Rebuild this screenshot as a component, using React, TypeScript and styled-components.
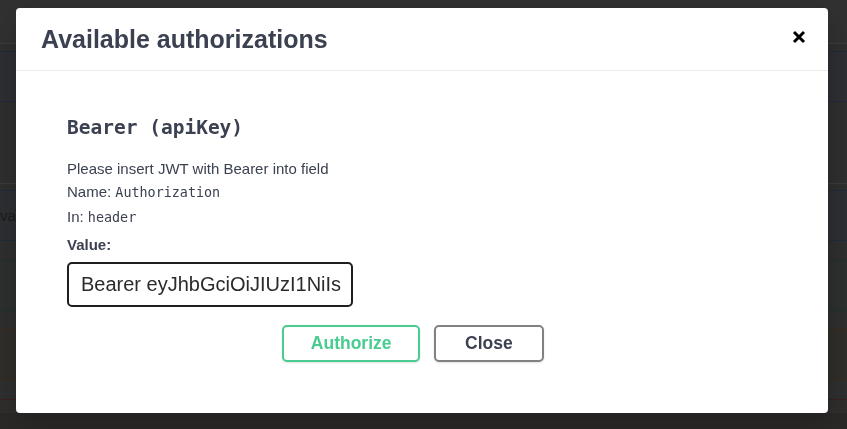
import React from "react";
import styled, { createGlobalStyle } from "styled-components";

const Global = createGlobalStyle`
  html, body { margin: 0; padding: 0; }
  body {
    background: #2f2f2f;
    overflow: hidden;
    font-family: "Liberation Sans", Arial, sans-serif;
  }
`;

/* ---------- dimmed page behind the modal ---------- */
const Backdrop = styled.div`
  display: flex;
  flex-direction: column;
  width: 847px;
  height: 429px;
  background: #2b2927;
`;

const Band = styled.div<{ $h: number; $fill: string; $line?: string }>`
  height: ${(p) => p.$h}px;
  box-sizing: border-box;
  background: ${(p) => p.$fill};
  border-top: ${(p) => (p.$line ? `1px solid ${p.$line}` : "none")};
  display: flex;
  align-items: center;
  font-family: "Liberation Sans", Arial, sans-serif;
  font-size: 15px;
  color: #1c1c1c;
  overflow: hidden;
`;

/* ---------- modal ---------- */
const Overlay = styled.div`
  position: fixed;
  inset: 0;
  display: flex;
  align-items: flex-start;
  justify-content: flex-start;
  padding: 8px 0 0 16px;
  box-sizing: border-box;
`;

const Modal = styled.div`
  width: 812px;
  background: #fff;
  border-radius: 4px;
  box-shadow: 0 10px 30px rgba(0, 0, 0, 0.2);
  display: flex;
  flex-direction: column;
`;

const Header = styled.div`
  height: 62px;
  display: flex;
  align-items: center;
  justify-content: space-between;
  padding: 0 22px 0 25px;
  border-bottom: 1px solid #ebebeb;
`;

const Title = styled.h3`
  margin: 0;
  font-family: "Liberation Sans", Arial, sans-serif;
  font-weight: 700;
  font-size: 25px;
  line-height: 63px;
  color: #3b4151;
`;

const CloseIcon = styled.button`
  border: none;
  background: none;
  padding: 0;
  width: 14px;
  height: 14px;
  display: flex;
  margin-bottom: 4px;
  cursor: pointer;
`;

const Body = styled.div`
  display: flex;
  flex-direction: column;
  align-items: flex-start;
  padding: 45px 51px 51px 51px;
`;

const SchemeTitle = styled.h4`
  margin: 0;
  font-family: "DejaVu Sans Mono", "Liberation Mono", monospace;
  font-weight: 700;
  font-size: 19.5px;
  line-height: 24px;
  color: #3b4151;
`;

const Para = styled.p<{ $mt: number }>`
  margin: ${(p) => p.$mt}px 0 0 0;
  font-family: "Liberation Sans", Arial, sans-serif;
  font-size: 15px;
  line-height: 20px;
  color: #3b4151;
`;

const Code = styled.code`
  font-family: "DejaVu Sans Mono", "Liberation Mono", monospace;
  font-size: 13.4px;
  line-height: 1;
  color: #3b4151;
`;

const Label = styled.label`
  margin-top: 8px;
  font-family: "Liberation Sans", Arial, sans-serif;
  font-weight: 700;
  font-size: 15px;
  line-height: 20px;
  color: #3b4151;
`;

const Input = styled.input`
  margin-top: 7px;
  width: 286px;
  height: 45px;
  box-sizing: border-box;
  border: 2px solid #1e1e1e;
  border-radius: 5px;
  padding: 0 8px 0 12px;
  font-family: "Liberation Sans", Arial, sans-serif;
  font-size: 20px;
  color: #2b2b2b;
  background: #fff;
  outline: none;
`;

const Actions = styled.div`
  align-self: stretch;
  margin-top: 18px;
  display: flex;
  justify-content: center;
  gap: 14px;
  padding-right: 18px;
`;

const Btn = styled.button<{ $variant: "authorize" | "close" }>`
  height: 37px;
  box-sizing: border-box;
  padding: 0 ${(p) => (p.$variant === "authorize" ? 26.5 : 29)}px;
  background: #fff;
  border: 2px solid ${(p) => (p.$variant === "authorize" ? "#49cc90" : "#818181")};
  color: ${(p) => (p.$variant === "authorize" ? "#49cc90" : "#3b4151")};
  border-radius: 5px;
  font-family: "Liberation Sans", Arial, sans-serif;
  font-weight: 700;
  font-size: 17.5px;
  box-shadow: 0 1px 2px rgba(0, 0, 0, 0.12);
  cursor: pointer;
`;

const bands = [
  { h: 43, fill: "#313131" },
  { h: 8, fill: "#2f2f2f", line: "#3d3d3d" },
  { h: 50, fill: "#2d2f32", line: "#1f2b3b" },
  { h: 82, fill: "#2f2f2f", line: "#1f2b3b" },
  { h: 7, fill: "#2f2f2f", line: "#3b3b3b" },
  { h: 50, fill: "#2d2f32", line: "#1f2b3b", text: "va" },
  { h: 20, fill: "#2f2f2f", line: "#1f2b3b" },
  { h: 50, fill: "#2d302e", line: "#1d3326" },
  { h: 19, fill: "#2f2f2f", line: "#1d3326" },
  { h: 50, fill: "#302e2b", line: "#3a2c19" },
  { h: 20, fill: "#2f2f2f", line: "#3a2c19" },
  { h: 14, fill: "#302d2d", line: "#3a1f1f" },
];

export default function App() {
  return (
    <>
      <Global />
      <Backdrop>
        {bands.map((b, i) => (
          <Band key={i} $h={b.h} $fill={b.fill} $line={b.line}>
            {b.text}
          </Band>
        ))}
      </Backdrop>
      <Overlay>
        <Modal>
          <Header>
            <Title>Available authorizations</Title>
            <CloseIcon aria-label="Close">
              <svg width="14" height="14" viewBox="0 0 14 14">
                <path d="M2 2 L12 12 M12 2 L2 12" stroke="#000" strokeWidth="3" strokeLinecap="butt" />
              </svg>
            </CloseIcon>
          </Header>
          <Body>
            <SchemeTitle>Bearer (apiKey)</SchemeTitle>
            <Para $mt={19}>Please insert JWT with Bearer into field</Para>
            <Para $mt={3}>
              Name: <Code>Authorization</Code>
            </Para>
            <Para $mt={5}>
              In: <Code>header</Code>
            </Para>
            <Label htmlFor="auth-value">Value:</Label>
            <Input id="auth-value" type="text" defaultValue="Bearer eyJhbGciOiJIUzI1NiIs" />
            <Actions>
              <Btn $variant="authorize">Authorize</Btn>
              <Btn $variant="close">Close</Btn>
            </Actions>
          </Body>
        </Modal>
      </Overlay>
    </>
  );
}
